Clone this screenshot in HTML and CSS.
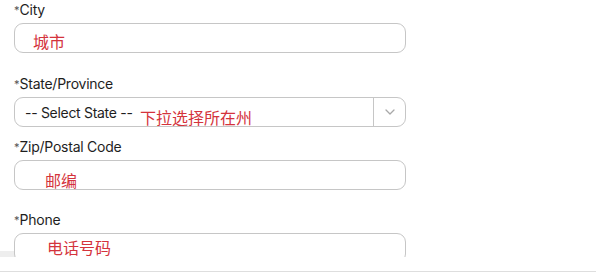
FILE: index.html
```html
<!DOCTYPE html>
<html lang="en">
<head>
<meta charset="utf-8">
<title>Address form</title>
<link rel="stylesheet" href="styles.css">
</head>
<body>
<div class="viewport">
  <form class="form">
    <div class="group group-city">
      <label class="label"><span class="req">*</span>City</label>
      <div class="field">
        <input class="input" type="text">
        <span class="note note-city">城市</span>
      </div>
    </div>
    <div class="group group-state">
      <label class="label"><span class="req">*</span>State/Province</label>
      <div class="field">
        <div class="select">
          <span class="select-value">-- Select State --</span>
          <span class="select-arrow">
            <svg width="10" height="6" viewBox="0 0 10 6"><path d="M1 1l4 4 4-4" fill="none" stroke="#a8a8a8" stroke-width="1.3" stroke-linecap="round" stroke-linejoin="round"/></svg>
          </span>
        </div>
        <span class="note note-state">下拉选择所在州</span>
      </div>
    </div>
    <div class="group group-zip">
      <label class="label"><span class="req">*</span>Zip/Postal Code</label>
      <div class="field">
        <input class="input" type="text">
        <span class="note note-zip">邮编</span>
      </div>
    </div>
    <div class="group group-phone">
      <label class="label"><span class="req">*</span>Phone</label>
      <div class="field">
        <input class="input" type="text">
        <span class="note note-phone">电话号码</span>
      </div>
    </div>
  </form>
  <div class="scrollbar"></div>
</div>
<div class="footer"></div>
</body>
</html>
```

FILE: styles.css
```css
html, body {
  margin: 0;
  padding: 0;
  background: #ffffff;
}
body {
  font-family: Inter, "Liberation Sans", "Noto Sans CJK SC", sans-serif;
  color: #222222;
  width: 596px;
  height: 273px;
  overflow: hidden;
}
.viewport {
  position: relative;
  height: 257px;
  overflow: hidden;
}
.form {
  margin: 0;
  padding: 0 0 0 14px;
  width: 392px;
  display: flex;
  flex-direction: column;
}
.group {
  display: flex;
  flex-direction: column;
}
.group-city { margin-bottom: 21px; }
.group-state { margin-bottom: 10px; }
.group-zip { margin-bottom: 20px; }
.label {
  font-size: 14px;
  line-height: 20px;
  height: 20px;
  margin-bottom: 3px;
  color: #1e1e1e;
  letter-spacing: -0.25px;
}
.req {
  font-size: 11px;
  color: #555555;
  position: relative;
  top: -1px;
  letter-spacing: 0;
}
.field {
  position: relative;
}
.input {
  display: block;
  box-sizing: border-box;
  width: 392px;
  height: 30px;
  margin: 0;
  border: 1px solid #c6c6c6;
  border-radius: 9px;
  background: #ffffff;
  outline: none;
  padding: 0 10px;
}
.select {
  box-sizing: border-box;
  width: 392px;
  height: 30px;
  border: 1px solid #c6c6c6;
  border-radius: 9px;
  display: flex;
  align-items: center;
}
.select-value {
  flex: 1;
  padding-left: 10px;
  font-size: 14px;
  color: #1e1e1e;
  letter-spacing: -0.3px;
}
.select-arrow {
  width: 31px;
  height: 100%;
  border-left: 1px solid #c6c6c6;
  display: flex;
  align-items: center;
  justify-content: center;
}
.select-arrow svg { display: block; }
.note {
  position: absolute;
  font-family: "Noto Sans CJK SC", sans-serif;
  font-size: 16px;
  line-height: 16px;
  color: #d4333c;
  white-space: nowrap;
}
.note-city { left: 19px; top: 10px; }
.note-state { left: 126px; top: 12px; }
.note-zip { left: 31px; top: 12px; }
.note-phone { left: 33px; top: 6px; }
.scrollbar {
  position: absolute;
  left: 0;
  top: 251px;
  width: 193px;
  height: 6px;
  background: #eeeeee;
  border-top-right-radius: 4px;
  z-index: 0;
}
.group-phone .field { z-index: 1; }
.group-phone .input { position: relative; z-index: -1; }
.footer {
  height: 14px;
  border-bottom: 1px solid #dedede;
}
```
